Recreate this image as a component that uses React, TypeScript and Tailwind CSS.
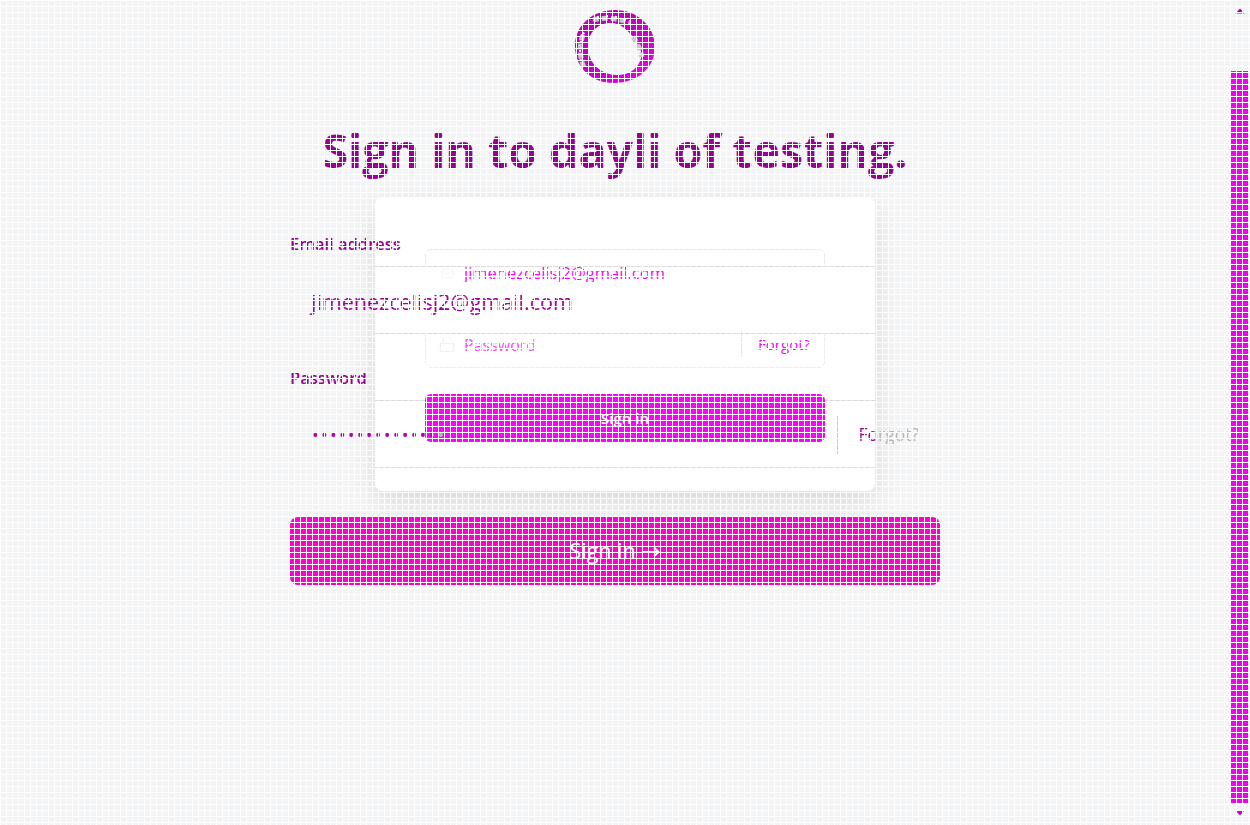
import React from "react";
import { Mail, Lock } from "lucide-react";

function Logo() {
  return (
    <svg width="84" height="76" viewBox="0 0 84 76" className="block">
      <defs>
        <linearGradient id="ring" x1="0" y1="0" x2="1" y2="1">
          <stop offset="0" stopColor="#b000b0" />
          <stop offset="0.6" stopColor="#cc00cc" />
          <stop offset="1" stopColor="#f000f0" />
        </linearGradient>
      </defs>
      <path
        fillRule="evenodd"
        fill="url(#ring)"
        d="M42 1C64 1 82 17 82 38C82 59 64 74 41 74C18 74 2 58 2 37C2 16 20 1 42 1ZM38 14C24 14 15 24 15 38C15 54 28 66 44 66C56 66 64 60 67 52C70 46 68 41 65 36C61 28 55 22 50 18C46 15 42 14 38 14Z"
      />
      <path
        d="M11 58C6 48 6 34 11 24M20 11C30 8 44 9 57 14M60 28C64 33 67 40 69 48"
        fill="none"
        stroke="#c8c8c8"
        strokeWidth="5"
        strokeDasharray="6 3"
      />
      <path
        d="M8 52C6 42 7 30 12 22M24 8C34 6 46 7 54 12"
        fill="none"
        stroke="#ffffff"
        strokeWidth="2"
        strokeDasharray="2 7"
      />
    </svg>
  );
}

function App() {
  return (
    <div className="relative flex h-[825px] w-full overflow-hidden bg-[#f3f4f6] font-['Open_Sans','Noto_Sans',sans-serif]">
      <main className="relative flex w-[1230px] shrink-0 flex-col items-center">
        <div className="pt-[9px]">
          <Logo />
        </div>
        <h1 className="relative z-10 mt-[35px] text-[46.5px] font-bold leading-[60px] text-[#960096]">
          Sign in to dayli of testing.
        </h1>

        {/* underlying card */}
        <section className="absolute left-[375px] top-[197px] z-0 h-[294px] w-[500px] rounded-lg bg-white px-[50px] pt-[52px] shadow-[0_10px_28px_rgba(0,0,0,0.12)]">
          <div className="pointer-events-none absolute inset-x-0 top-[69px]">
            <div className="h-[67px] border-t border-[#dcdcdc]" />
            <div className="h-[67px] border-t border-[#dcdcdc]" />
            <div className="h-[67px] border-t border-[#dcdcdc]" />
            <div className="h-[25px] border-t border-[#dcdcdc]" />
          </div>
          <div className="relative h-[48px] rounded-md border border-[#e4eaed]" />
          <div className="relative mt-[23px] h-[48px] rounded-md border border-[#e8edf0]" />
          <div className="absolute inset-x-0 top-[70px] h-[66px] bg-white/90" />
          <div className="absolute left-[50px] top-[52px] flex h-[48px] w-[400px] items-center pl-[16px]">
            <Mail size={13} strokeWidth={1.5} className="text-[#f0f0f0]" />
            <span className="ml-[10px] text-[16.5px] text-[#ff00ff]">jimenezcelisj2@gmail.com</span>
          </div>
          <div className="absolute left-[50px] top-[123px] flex h-[48px] w-[400px] items-center pl-[13px]">
            <Lock size={18} strokeWidth={1.5} className="text-[#ececec]" />
            <span className="ml-[8px] flex-1 pt-[2px] text-[16px] text-[#ff40ff]">Password</span>
            <span className="flex h-[26px] items-center border-l border-[#dfe7ea] pl-[16px] pr-[15px] text-[15px] text-[#ff00ff]">
              Forgot?
            </span>
          </div>
          <button className="relative mt-[26px] block h-[48px] w-full rounded-md bg-[#ff00ff] text-[15px] font-semibold text-white">
            Sign in
          </button>
        </section>

        {/* form on top */}
        <form className="relative z-10 mt-[52px] flex w-[650px] flex-col">
          <label className="text-[16.5px] font-semibold leading-[24px] text-[#980098]">Email address</label>
          <div className="mt-[21px] h-[50px] pl-[21px] text-[21.5px] leading-[50px] text-[#a000a0]">
            jimenezcelisj2@gmail.com
          </div>
          <label className="mt-[39px] text-[16.5px] font-semibold leading-[24px] text-[#980098]">Password</label>
          <div className="mt-[21px] flex h-[48px] items-center">
            <span className="ml-[22px] flex-1 text-[18px] leading-[48px] tracking-[2.2px] bg-[linear-gradient(to_right,#b800b8_120px,#b4b4b4_120px)] bg-clip-text text-transparent">
              •••••••••••••••
            </span>
            <span className="ml-auto flex h-[38px] items-center border-l border-[#c8c8c8] pb-[2px] pl-[20px] pr-[21px] text-[17.5px] bg-[linear-gradient(to_right,transparent_20px,#a000a0_20px,#a000a0_37px,#b4b4b4_37px)] bg-clip-text text-transparent">
              Forgot?
            </span>
          </div>
          <button
            type="button"
            className="mt-[58px] block h-[68px] w-full rounded-lg bg-[#ff00cc] text-[21.5px] text-white"
          >
            Sign in <span className="font-['DejaVu_Sans',sans-serif] text-[23px]">→</span>
          </button>
        </form>
      </main>

      {/* scrollbar */}
      <aside className="relative z-10 flex w-[20px] shrink-0 flex-col items-center">
        <svg width="10" height="6" viewBox="0 0 10 6" className="mt-[8px] block">
          <path d="M5 0.5L9.5 5.5H0.5Z" fill="#a000a0" />
        </svg>
        <div className="mt-[57px] h-[732px] w-[18px] bg-[#f000f0]" />
        <svg width="10" height="6" viewBox="0 0 10 6" className="mt-[7px] block">
          <path d="M0.5 0.5H9.5L5 5.5Z" fill="#c800c8" />
        </svg>
      </aside>

      {/* grid overlay */}
      <div className="pointer-events-none absolute inset-0 z-20 bg-[linear-gradient(to_right,#ffffff_1px,transparent_1px),linear-gradient(to_bottom,#ffffff_1px,transparent_1px)] bg-[size:6px_6px]" />
    </div>
  );
}

export default App;
